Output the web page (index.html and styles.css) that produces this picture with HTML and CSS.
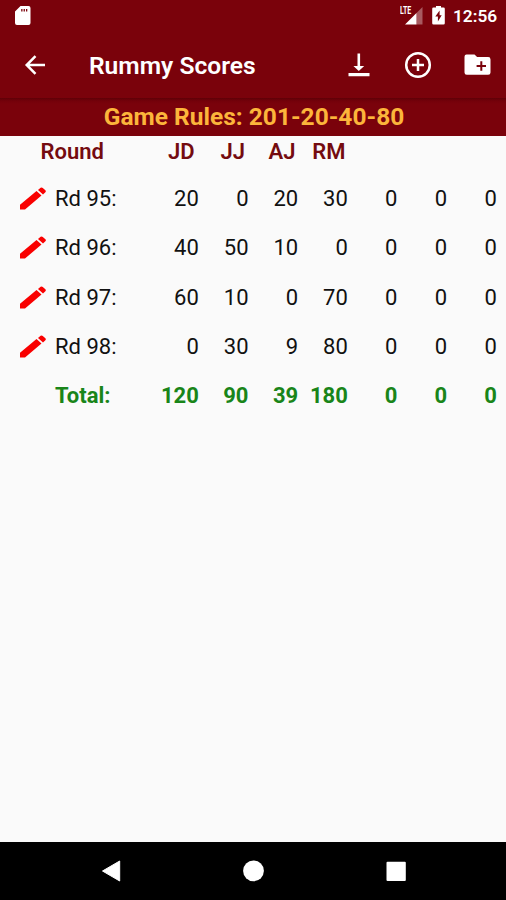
FILE: index.html
```
<!DOCTYPE html>
<html lang="en">
<head>
<meta charset="utf-8">
<title>Rummy Scores</title>
<link rel="stylesheet" href="styles.css">
</head>
<body>
<svg class="defs" width="0" height="0"><symbol id="pencil" viewBox="0 0 27 23"><path d="M0 22.500v-4.800L16.500 4l5 4.600L5 22.500zM18 2.900l2.600-2.100q1.200-.8 2.200.1l2.600 2.300q1 1.100 0 2L23 7.400z"/></symbol></svg>
<div class="screen">
  <header class="top">
    <div class="status">
      <svg class="sd" width="17" height="20" viewBox="0 0 17 20"><path fill="#fff" fill-rule="evenodd" d="M6.500 0h8q2 0 2 2v15q0 2-2 2H3q-2 0-2-2V5.500zM7.200 3v2.500h1.300V3zM9.600 3v2.500h1.300V3zM12 3v2.500h1.300V3z"/></svg>
      <div class="signal">
        <span class="lte">LTE</span>
        <svg width="18" height="18" viewBox="0 0 18 18"><path fill="#fff" fill-opacity=".35" d="M17.500 0v17.500h-6V6z"/><path fill="#fff" d="M11.500 6v11.500H0z"/></svg>
      </div>
      <svg class="battery" width="13" height="20" viewBox="0 0 13 20"><path fill="#fff" fill-rule="evenodd" d="M4 0h5v1.500h2.500q1.300 0 1.300 1.300v14.400q0 1.300-1.300 1.300h-10Q.2 18.500.2 17.200V2.800Q.2 1.500 1.500 1.500H4zM7.600 4.500 3.300 10.500h2.600V15.500L9.700 9.300H7.600z"/></svg>
      <span class="clock">12:56</span>
    </div>
    <div class="bar">
      <svg class="back" width="22" height="20" viewBox="0 0 22 20"><path fill="none" stroke="#fff" stroke-width="2.500" d="M21 10H3M11.500 1.200 2.700 10l8.800 8.800"/></svg>
      <h1>Rummy Scores</h1>
      <svg class="download" width="22" height="24" viewBox="0 0 22 24"><path fill="#fff" d="M9.500.5h2.600V13h4.100l-5.400 5-5.400-5h4.100zM.5 20h21v3.200H.5z"/></svg>
      <svg class="add" width="28" height="28" viewBox="0 0 28 28"><g fill="none" stroke="#fff" stroke-width="2.500"><circle cx="14" cy="14" r="11.800"/><path d="M14 8v12M8 14h12"/></g></svg>
      <svg class="folder" width="27" height="22" viewBox="0 0 27 22"><path fill="#fff" d="M2.500.5h8l2.600 2.600h11.100q2.300 0 2.300 2.300v13q0 2.300-2.300 2.300H2.800Q.5 20.700.5 18.400V2.800Q.5.500 2.500.500z"/><path stroke="#7a020b" stroke-width="2" d="M17.300 7.300v9.400M12.600 12h9.400"/></svg>
    </div>
  </header>
  <div class="rules">Game Rules: 201-20-40-80</div>
  <main>
    <div class="row head"><span class="round">Round</span><span>JD</span><span>JJ</span><span>AJ</span><span>RM</span></div>
    <div class="row"><svg class="edit"><use href="#pencil"/></svg><span class="name">Rd 95:</span><span>20</span><span>0</span><span>20</span><span>30</span><span>0</span><span>0</span><span>0</span></div>
    <div class="row"><svg class="edit"><use href="#pencil"/></svg><span class="name">Rd 96:</span><span>40</span><span>50</span><span>10</span><span>0</span><span>0</span><span>0</span><span>0</span></div>
    <div class="row"><svg class="edit"><use href="#pencil"/></svg><span class="name">Rd 97:</span><span>60</span><span>10</span><span>0</span><span>70</span><span>0</span><span>0</span><span>0</span></div>
    <div class="row"><svg class="edit"><use href="#pencil"/></svg><span class="name">Rd 98:</span><span>0</span><span>30</span><span>9</span><span>80</span><span>0</span><span>0</span><span>0</span></div>
    <div class="row total"><span></span><span class="name">Total:</span><span>120</span><span>90</span><span>39</span><span>180</span><span>0</span><span>0</span><span>0</span></div>
  </main>
  <nav>
    <svg width="20" height="22" viewBox="0 0 20 22"><path fill="#fff" stroke="#fff" stroke-linejoin="round" d="M1.500 11 18.700 1v20z"/></svg>
    <svg width="22" height="22" viewBox="0 0 22 22"><circle cx="10.500" cy="10.800" r="10.400" fill="#fff"/></svg>
    <svg width="20" height="22" viewBox="0 0 20 22"><rect x=".5" y="1.700" width="19.300" height="19.300" rx="1" fill="#fff"/></svg>
  </nav>
</div>
</body>
</html>
```

FILE: styles.css
```
body { margin: 0; }
.defs { display: block; }
.screen {
  width: 506px;
  height: 900px;
  display: flex;
  flex-direction: column;
  overflow: hidden;
  background: #fafafa;
  font-family: Roboto, sans-serif;
}
svg { display: block; flex: none; }
.top { height: 98px; background: #7a020b; color: #fff; }
.status {
  height: 32px;
  box-sizing: border-box;
  display: flex;
  align-items: flex-start;
  padding: 6px 9px 0 14px;
}
.signal { display: flex; margin-left: auto; }
.signal svg { margin-top: 1px; margin-left: -9px; }
.lte {
  width: 14px;
  font-size: 10px;
  line-height: 9px;
  font-weight: 700;
  transform: scaleX(.7);
  transform-origin: left;
}
.battery { margin-left: 9px; }
.clock { width: 44px; margin-left: 8px; font-size: 17.300px; line-height: 20px; font-weight: 600; white-space: nowrap; }
.bar { height: 66px; display: flex; align-items: center; padding: 0 15px 0 24px; }
.bar h1 { flex: 1; margin: 2px 0 0 43px; font-size: 24.600px; line-height: 30px; font-weight: 600; white-space: nowrap; }
.download { margin-right: -1px; }
.add { margin-left: 35px; }
.folder { margin-left: 32px; }
.rules {
  height: 38px;
  box-sizing: border-box;
  padding-top: 3px;
  padding-left: 2px;
  background: linear-gradient(#5f0007 0, #74010a 3px, #7a020b 6px);
  color: #fcb53b;
  text-align: center;
  font-size: 24.500px;
  line-height: 32px;
  font-weight: 700;
}
main { flex: 1; }
.row {
  height: 49.250px;
  display: grid;
  grid-template-columns: 35.500px 94.200px repeat(7, 49.670px);
  padding-left: 19.500px;
  align-items: center;
  font-size: 22px;
  color: #111;
  text-align: right;
  white-space: nowrap;
}
.edit { width: 27px; height: 23px; fill: #f90000; }
.name { text-align: left; }
.head {
  height: 38px;
  grid-template-columns: 35.500px 89.500px 50px 50.500px 50.500px 50px;
  align-items: start;
  color: #740b10;
  font-weight: 600;
  line-height: 32px;
}
.head .round { grid-column: 1 / 3; text-align: left; padding-left: 21px; }
.total { color: #198519; font-weight: 700; }
nav {
  height: 58px;
  display: flex;
  align-items: center;
  justify-content: space-between;
  padding: 0 100px 0 101px;
  background: #000;
}
```
